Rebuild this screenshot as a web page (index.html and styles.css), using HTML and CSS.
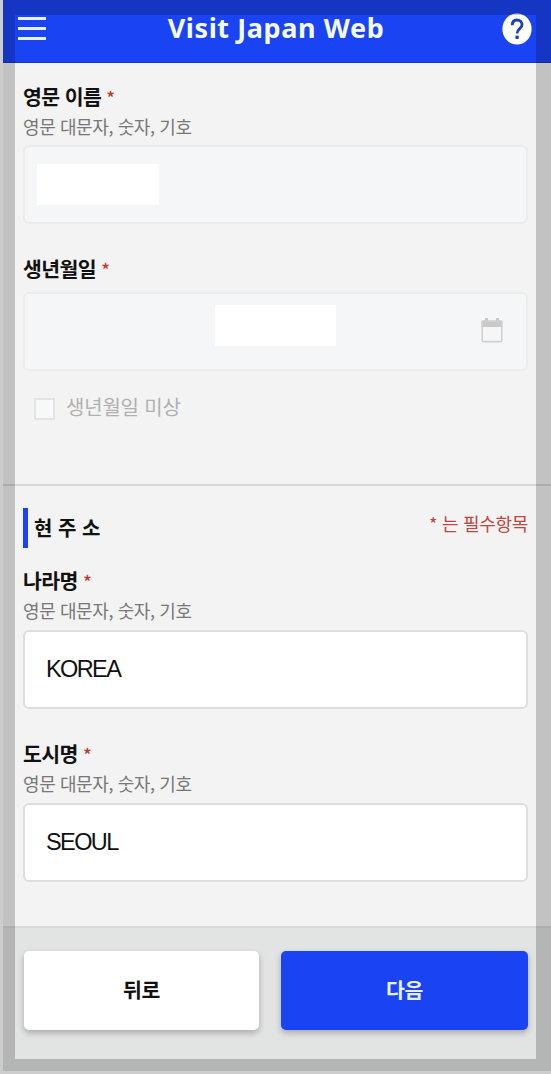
FILE: index.html
```html
<!DOCTYPE html>
<html lang="ko">
<head>
    <meta charset="UTF-8">
    <meta name="viewport" content="width=device-width, initial-scale=1.0">
    <title>Visit Japan Web</title>
    <link rel="stylesheet" href="styles.css">
</head>
<body>
    <div class="app">
        <header class="header">
            <button class="menu-button" aria-label="메뉴">
                <span></span>
                <span></span>
                <span></span>
            </button>
            <h1>Visit Japan Web</h1>
            <a class="help" href="#" aria-label="도움말">
                <svg viewBox="0 0 30 32" width="30" height="32">
                    <ellipse cx="15" cy="16" rx="14.6" ry="15.6" fill="#fff"/>
                    <path d="M10.2 12.2C10.2 8.6 12.2 7 15 7S20 8.7 20 11.7C20 15.4 15.1 15.8 15.1 20.6" fill="none" stroke="#1c3fb8" stroke-width="2.8"/>
                    <rect x="13.5" y="22.6" width="3.2" height="3.4" fill="#1c3fb8"/>
                </svg>
            </a>
        </header>

        <main>
            <section class="form-section">
                <div class="field">
                    <label for="name">영문 이름 <span class="required">*</span></label>
                    <p class="hint">영문 대문자, 숫자, 기호</p>
                    <div class="input-box disabled" id="name">
                        <span class="mask"></span>
                    </div>
                </div>

                <div class="field birth">
                    <label for="birth">생년월일 <span class="required">*</span></label>
                    <div class="input-box disabled date" id="birth">
                        <span class="mask"></span>
                        <svg class="calendar" viewBox="0 0 22 26" width="22" height="26">
                            <path d="M4 1h3v3H4zM15 1h3v3h-3zM0.5 3.5h21V10h-21z" fill="#c9c9c9"/>
                            <rect x="1.2" y="4.2" width="19.6" height="20.4" rx="1" fill="none" stroke="#d0d0d0" stroke-width="1.6"/>
                        </svg>
                    </div>
                </div>

                <div class="unknown">
                    <span class="checkbox"></span>
                    <span>생년월일 미상</span>
                </div>
            </section>

            <section class="form-section address">
                <div class="section-title">
                    <h2>현 주 소</h2>
                    <p>* 는 필수항목</p>
                </div>

                <div class="field">
                    <label for="country">나라명 <span class="required">*</span></label>
                    <p class="hint">영문 대문자, 숫자, 기호</p>
                    <input class="input-box" type="text" id="country" value="KOREA">
                </div>

                <div class="field">
                    <label for="city">도시명 <span class="required">*</span></label>
                    <p class="hint">영문 대문자, 숫자, 기호</p>
                    <input class="input-box" type="text" id="city" value="SEOUL">
                </div>
            </section>
        </main>

        <footer class="actions">
            <button class="btn btn-back">뒤로</button>
            <button class="btn btn-next">다음</button>
        </footer>
    </div>
</body>
</html>
```
FILE: styles.css
```css
* {
    margin: 0;
    padding: 0;
    box-sizing: border-box;
}

body {
    font-family: "Noto Sans CJK KR", sans-serif;
    background: #fff;
    color: #111;
    position: relative;
    height: 1074px;
    padding: 0 0 3px 3px;
    overflow: hidden;
}

/* 화면 테두리 */
body::after {
    content: "";
    position: absolute;
    inset: 0;
    border: 15px solid rgba(0, 0, 0, 0.2);
    pointer-events: none;
}

.app {
    display: flex;
    flex-direction: column;
    height: 1071px;
    background: #f3f3f3;
}

.header {
    display: flex;
    align-items: center;
    justify-content: space-between;
    height: 63px;
    padding: 0 19px 5px 15px;
    background: #1a44f3;
    border-bottom: 1px solid #1436b8;
}

.header h1 {
    margin: -2px 0 0 4px;
    font-family: "Noto Sans", sans-serif;
    font-size: 27px;
    font-weight: 700;
    letter-spacing: 0.6px;
    color: #f4fafa;
}

.menu-button {
    display: flex;
    flex-direction: column;
    gap: 7px;
    width: 28px;
    border: none;
    background: none;
}

.menu-button span {
    height: 3px;
    background: #e8f2fa;
}

.help {
    display: flex;
}

.form-section {
    padding: 19px 23px 0 20px;
}

.field {
    margin-bottom: 30px;
}

.field label {
    display: block;
    height: 30px;
    font-size: 20.5px;
    font-weight: 700;
    line-height: 29px;
    letter-spacing: -0.6px;
}

.required {
    color: #c0392f;
    font-size: 18px;
    font-weight: 500;
    line-height: 1;
}

.hint {
    height: 33px;
    font-size: 18px;
    line-height: 28px;
    letter-spacing: -0.4px;
    color: #777;
}

.input-box {
    display: flex;
    align-items: center;
    width: 100%;
    height: 79px;
    padding: 0 21px;
    border: 2px solid #dcdedf;
    border-radius: 6px;
    background: #fff;
    color: #111;
    font-family: "Liberation Sans", Arial, sans-serif;
    font-size: 23.5px;
    letter-spacing: -1.6px;
}

.input-box.disabled {
    padding: 0 12px;
    border-color: #ebeded;
    background: #f5f6f8;
}

.mask {
    width: 122px;
    height: 41px;
    background: #fff;
}

.birth {
    margin-bottom: 22px;
}

.birth .input-box {
    margin-top: 8px;
}

.input-box.date {
    justify-content: space-between;
    padding: 0 23px 4px 190px;
}

.date .mask {
    width: 121px;
    margin-bottom: 8px;
}

.unknown {
    display: flex;
    align-items: center;
    gap: 11px;
    height: 30px;
    margin: 0 0 61px 11px;
    font-size: 20px;
    line-height: 28px;
    letter-spacing: -0.2px;
    color: #b0b0b0;
}

.unknown span:last-child {
    margin-bottom: 2px;
}

.checkbox {
    width: 21px;
    height: 22px;
    margin-top: 2px;
    border: 2px solid #e2e4e4;
    background: #f6f8f9;
}

.address {
    padding-top: 22px;
    border-top: 2px solid #d7d8d8;
}

.section-title {
    display: flex;
    justify-content: space-between;
    margin-bottom: 18px;
}

.section-title h2 {
    height: 40px;
    padding-left: 6px;
    border-left: 5px solid #1a44f3;
    font-size: 20px;
    font-weight: 700;
    line-height: 39px;
}

.section-title p {
    font-size: 18px;
    line-height: 30px;
    letter-spacing: -0.3px;
    color: #c0443f;
}

.address .hint {
    height: 34px;
}

.actions {
    display: flex;
    gap: 22px;
    margin-top: auto;
    height: 145px;
    padding: 25px 23px 0 21px;
    border-top: 2px solid #d9dada;
    background: #e2e3e3;
}

.btn {
    height: 79px;
    margin-top: -2px;
    padding-bottom: 3px;
    border: none;
    border-radius: 5px;
    font-family: inherit;
    font-size: 20.5px;
    font-weight: 700;
    letter-spacing: -0.3px;
    box-shadow: 0 3px 6px rgba(0, 0, 0, 0.25);
}

.btn-back {
    width: 235px;
    background: #fff;
    color: #111;
}

.btn-next {
    flex: 1;
    background: #1a44f3;
    color: #e8effc;
}
```
